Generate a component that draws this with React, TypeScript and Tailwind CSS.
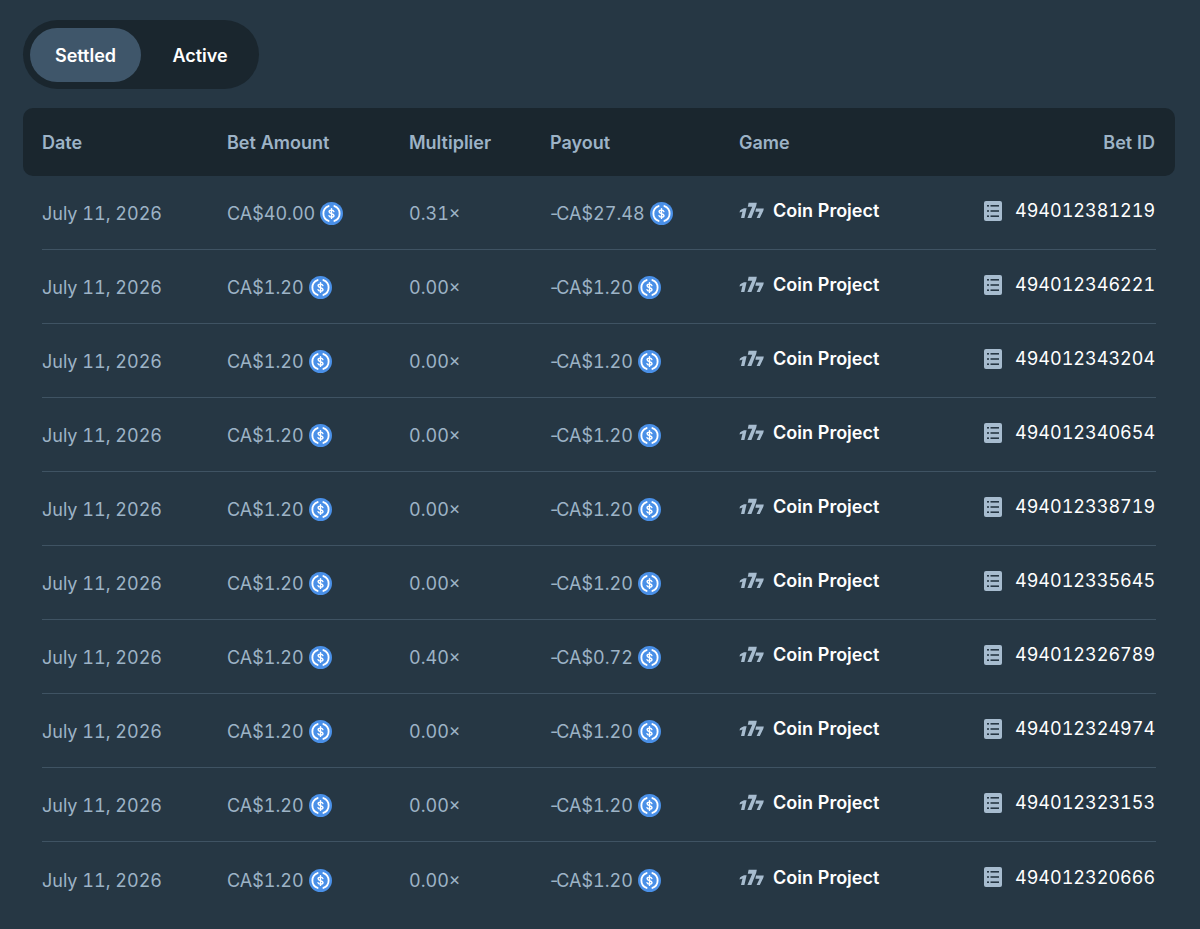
const rows = [
  ["CA$40.00", "0.31×", "CA$27.48", "494012381219"],
  ["CA$1.20", "0.00×", "CA$1.20", "494012346221"],
  ["CA$1.20", "0.00×", "CA$1.20", "494012343204"],
  ["CA$1.20", "0.00×", "CA$1.20", "494012340654"],
  ["CA$1.20", "0.00×", "CA$1.20", "494012338719"],
  ["CA$1.20", "0.00×", "CA$1.20", "494012335645"],
  ["CA$1.20", "0.40×", "CA$0.72", "494012326789"],
  ["CA$1.20", "0.00×", "CA$1.20", "494012324974"],
  ["CA$1.20", "0.00×", "CA$1.20", "494012323153"],
  ["CA$1.20", "0.00×", "CA$1.20", "494012320666"],
];

function Usdc() {
  return (
    <svg width="23" height="23" viewBox="0 0 24 24" className="shrink-0">
      <circle cx="12" cy="12" r="12" fill="#4a90e8" />
      <path d="M9 4.2a8.3 8.3 0 0 0 0 15.6" fill="none" stroke="#fff" strokeWidth="1.9" strokeLinecap="round" />
      <path d="M15 4.2a8.3 8.3 0 0 1 0 15.6" fill="none" stroke="#fff" strokeWidth="1.9" strokeLinecap="round" />
      <path d="M14.5 10c-.3-1-1.2-1.5-2.5-1.5-1.5 0-2.5.7-2.5 1.8 0 2.7 5.1 1.1 5.1 3.7 0 1.1-1.1 1.8-2.6 1.8-1.4 0-2.4-.6-2.6-1.6M12 6.9v10.2" fill="none" stroke="#fff" strokeWidth="1.5" strokeLinecap="round" />
    </svg>
  );
}

function Logo() {
  return (
    <svg width="25" height="17" viewBox="0 0 25 17" className="shrink-0" fill="#a7bccf">
      <path d="M2.4 7.6 5 6.2h2.6L5.4 16H2l1.5-6.4-3 1 .5-2z" />
      <path d="M9.6.8h8.2l-.6 3L12.4 16H8.4l4.8-11.2H8.8z" />
      <path d="M17 6.4h7.8l-.5 2.4L20.8 16h-3.2l3-6.2h-4.2z" />
    </svg>
  );
}

function Ticket() {
  return (
    <svg width="18" height="20" viewBox="0 0 18 20" className="shrink-0">
      <rect width="18" height="20" rx="2" fill="#a7bccf" />
      <g fill="#263744">
        <rect x="3" y="4" width="2" height="1.6" />
        <rect x="6.5" y="4" width="8.5" height="1.6" />
        <rect x="3" y="9.2" width="2" height="1.6" />
        <rect x="6.5" y="9.2" width="8.5" height="1.6" />
        <rect x="3" y="14.4" width="2" height="1.6" />
        <rect x="6.5" y="14.4" width="8.5" height="1.6" />
      </g>
    </svg>
  );
}

const cols = "grid grid-cols-[185px_182px_141px_189px_1fr] items-center";

export default function App() {
  return (
    <div className="min-h-[929px] bg-[#263744] pl-[23px] pr-[25px] pt-[20px] font-['Inter','Liberation_Sans',sans-serif] text-[18px] text-[#9db3c6] tabular-nums">
      <div className="inline-flex h-[69px] items-center rounded-full bg-[#1a262e] p-[7px] font-semibold text-white">
        <div className="flex h-[54px] w-[111px] items-center justify-center rounded-full bg-[#3f566a] pt-[1px]">Settled</div>
        <div className="flex h-[54px] w-[111px] items-center justify-center pl-[7px] pt-[1px]">Active</div>
      </div>
      <div className="mt-[19px] h-[68px] rounded-[10px] bg-[#1a262e] pl-[19px] pr-[20px] font-semibold">
        <div className={`${cols} h-full`}>
          <div>Date</div>
          <div>Bet Amount</div>
          <div>Multiplier</div>
          <div>Payout</div>
          <div className="flex justify-between">
            <span>Game</span>
            <span>Bet ID</span>
          </div>
        </div>
      </div>
      <div className="mx-[19px]">
        {rows.map((r) => (
          <div key={r[3]} className={`${cols} h-[74px] border-b border-[#3f5363] last:border-b-0`}>
            <div className="pt-[2px]">July 11, 2026</div>
            <div className="flex items-center gap-[5px] pt-[2px]">{r[0]}<Usdc /></div>
            <div className="pt-[2px]">{r[1]}</div>
            <div className="flex items-center gap-[5px] pt-[2px]">
              <span><span className="normal-nums tracking-[-2px]">-</span>{r[2]}</span>
              <Usdc />
            </div>
            <div className="flex items-center justify-between pb-[4px] pr-[1px]">
              <div className="flex items-center gap-[9px] font-semibold text-white"><Logo />Coin Project</div>
              <div className="flex w-[171px] items-center gap-[13px] text-white"><Ticket />{r[3]}</div>
            </div>
          </div>
        ))}
      </div>
    </div>
  );
}
